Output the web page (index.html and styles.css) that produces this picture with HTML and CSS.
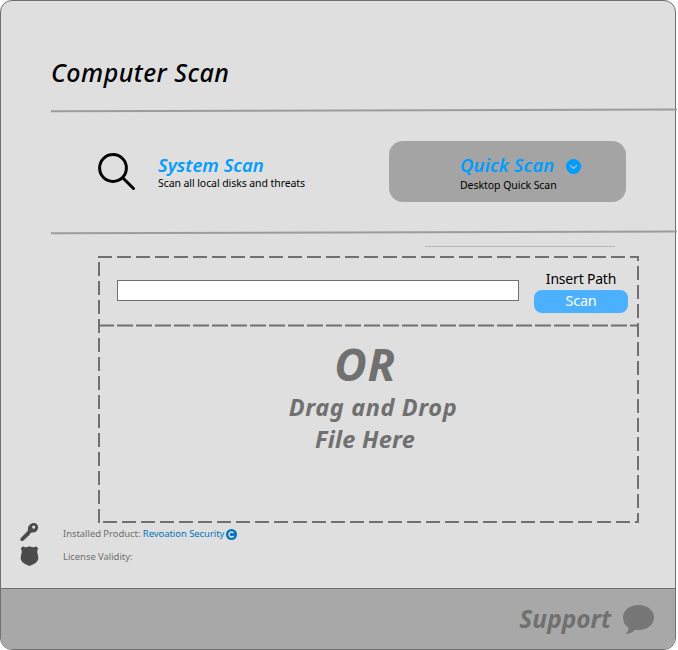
FILE: index.html
```html
<!DOCTYPE html>
<html lang="en">
<head>
<meta charset="utf-8">
<title>Computer Scan</title>
<link rel="stylesheet" href="styles.css">
</head>
<body>
<main class="window">
  <header class="header"><h1 class="title">Computer Scan</h1></header>
  <svg class="rule" viewBox="0 0 626 6"><path d="M0 4.3 626 2.4"/></svg>
  <section class="modes">
    <svg class="search" viewBox="0 0 38 38"><circle cx="15" cy="15" r="13.4"/><path d="m25 25 10.500 10.500"/></svg>
    <div class="mode system">
      <h2 class="mode-title"><span class="system-title">System Scan</span></h2>
      <p class="mode-text system-text">Scan all local disks and threats</p>
    </div>
    <div class="quick">
      <div class="mode">
        <h2 class="mode-title"><span class="quick-title">Quick Scan</span>
          <svg class="chevron" viewBox="0 0 15 15"><circle cx="7.5" cy="7.5" r="7.5"/><path d="m4 6.1 3.5 3.4L11 6.1"/></svg>
        </h2>
        <p class="mode-text quick-text">Desktop Quick Scan</p>
      </div>
    </div>
  </section>
  <svg class="rule" viewBox="0 0 626 6"><path d="M0 4.3 626 2.4"/></svg>
  <div class="thin-rule"></div>
  <section class="drop">
    <svg class="frame" viewBox="0 0 541 267">
      <rect class="outline" width="541" height="267"/>
      <path class="split" d="M1 69.5H539"/>
    </svg>
    <form class="path-row">
      <input class="path-input" type="text" aria-label="Path">
      <div class="path-action">
        <label class="path-label">Insert Path</label>
        <button class="scan" type="button"><span>Scan</span></button>
      </div>
    </form>
    <div class="drop-text">
      <p class="or">OR</p>
      <p class="drag">Drag and Drop</p>
      <p class="file">File Here</p>
    </div>
  </section>
  <section class="info">
    <div class="info-row">
      <svg class="info-icon" viewBox="0 0 20 20"><path fill-rule="evenodd" d="M12.4.3c3-1 6 1.2 5.7 4.4-.3 3.5-3.3 5.6-6.6 4.7L9.6 11.300l-.4 1.500-1.500.2-.3 1.500-1.500.3-.3 1.300-1.300.3L3 18 .5 17.700.4 15.500 8 7.500C7.200 4.300 9.200 1.200 12.400.3ZM13.700 2.500a1.600 1.600 0 1 0 .01 3.200 1.600 1.600 0 0 0-.01-3.200Z"/></svg>
      <p class="info-text"><span class="product">Installed Product:</span> <a class="link">Revoation Security</a></p>
      <svg class="badge" viewBox="0 0 11 11"><circle cx="5.500" cy="5.500" r="5.500"/><path d="M7.600 4A2.500 2.500 0 1 0 7.600 7"/></svg>
    </div>
    <div class="info-row">
      <svg class="info-icon" viewBox="0 0 20 20"><path d="M3 .2 4.800 1.200Q7 1.500 9.500.2 12 1.500 14.200 1.200L16 .2 18.300 2.400Q16.800 4 17.300 6.500L18.200 10.500C19 15.500 15.500 17.500 9.500 20 3.500 17.500 0 15.500.8 10.500L1.700 6.500Q2.200 4 .7 2.400Z"/></svg>
      <p class="info-text license">License Validity:</p>
    </div>
  </section>
  <footer class="footer">
    <span class="support">Support</span>
    <svg class="bubble" viewBox="0 0 32 30"><path d="M15.500 0C24.300 0 31 5.300 31 12.500S24.300 25 15.500 25c-1.200 0-2.300-.1-3.400-.3C9.500 27.600 6 29 2 29c2.500-1.500 3.600-3.400 3.500-6.200C2.200 20.500 0 16.800 0 12.500 0 5.300 6.700 0 15.500 0Z"/></svg>
  </footer>
</main>
</body>
</html>
```
FILE: styles.css
```css
* { box-sizing: border-box; }
body { margin: 0; background: #fff; font-family: "Noto Sans", "Open Sans", sans-serif; }
h1, h2, p { margin: 0; white-space: nowrap; }
svg { display: block; flex: none; }

.window {
  width: 676px; height: 650px;
  display: flex; flex-direction: column;
  background: #dfdfdf; border: 1px solid #707070; border-radius: 12px;
}
.header { height: 106px; padding: 54px 0 0 50px; flex: none; }
.title { font-size: 25px; line-height: 34px; font-weight: 500; font-style: italic; letter-spacing: .48px; color: #000; }

.rule { width: 626px; height: 6px; margin-left: 50px; overflow: visible; }
.rule path { stroke: #9c9c9c; stroke-width: 2; }

.modes { height: 116px; padding: 28px 49px 0 97px; display: flex; align-items: flex-start; flex: none; }
.search { width: 38px; height: 38px; margin-top: 12px; fill: none; stroke: #000; stroke-width: 3; stroke-linecap: round; }
.system { margin: 13px 0 0 22px; }
.mode-title { display: flex; align-items: center; gap: 12px; height: 22px; line-height: 22px; font-size: 18.500px; font-weight: 600; font-style: italic; color: #009dff; }
.quick-title { letter-spacing: .1px; }
.mode-text { font-size: 10.500px; line-height: 14px; color: #000; }
.system-text { letter-spacing: -.08px; }
.quick { width: 237px; height: 61px; margin-left: auto; padding: 13px 0 0 71px; background: #a4a4a4; border-radius: 14px; }
.quick-text { margin-top: 2px; letter-spacing: -.05px; }
.chevron { width: 15px; height: 15px; margin-top: 3px; fill: #009dff; }
.chevron path { fill: none; stroke: #c4c4c4; stroke-width: 1.200; }

.thin-rule { width: 190px; height: 1px; margin: 11px 0 0 424px; background: #b7b7b7; flex: none; }

.drop { position: relative; width: 541px; height: 267px; margin: 9px 0 0 97px; flex: none; }
.frame { position: absolute; inset: 0; width: 541px; height: 267px; overflow: hidden; pointer-events: none; }
.outline { fill: none; stroke: #707070; stroke-width: 4; stroke-dasharray: 14 5; }
.split { stroke: #707070; stroke-width: 2; stroke-dasharray: 16 3; stroke-dashoffset: 1; }
.path-row { display: flex; height: 70px; padding: 12px 11px 0 19px; }
.path-input { width: 402px; height: 21px; margin: 12px 0 0; padding: 0 6px; background: #fff; border: 1px solid #707070; border-radius: 0; font: inherit; }
.path-action { width: 94px; margin-left: auto; }
.path-label { display: block; height: 22px; line-height: 22px; font-size: 14px; letter-spacing: -.2px; text-align: center; white-space: nowrap; }
.scan { display: block; width: 94px; height: 23px; padding: 0; border: 0; border-radius: 8px; background: #4bb1ff; color: #fff; font: 14.500px/20px "Noto Sans", sans-serif; }
.scan span { display: block; height: 23px; letter-spacing: -.3px; }
.drop-text { padding-right: 7px; color: #707070; text-align: center; font-weight: 700; font-style: italic; }
.or { height: 65px; line-height: 76px; font-size: 44.500px; letter-spacing: .8px; }
.drag, .file { font-size: 23.500px; line-height: 32px; }
.drag { padding-left: 16px; letter-spacing: .6px; }
.file { letter-spacing: .25px; }

.info { height: 65px; padding-left: 19px; flex: none; display: flex; flex-direction: column; gap: 3px; }
.info-row { display: flex; align-items: center; height: 20px; }
.info-icon { width: 20px; height: 20px; fill: #4b4b4b; }
.info-text { margin: 2px 0 0 23px; font-size: 9.500px; line-height: 20px; letter-spacing: -.06px; color: #707070; }
.link { color: #0073ba; }
.badge { width: 11px; height: 11px; margin: 3px 0 0 2px; fill: #0073ba; }
.badge path { fill: none; stroke: #dfdfdf; stroke-width: 1.600; }

.footer { flex: 1; display: flex; padding: 15px 20px 0 0; justify-content: flex-end; background: #a8a8a8; border-top: 1px solid #707070; border-radius: 0 0 11px 11px; }
.support { font-size: 24.500px; line-height: 30px; font-weight: 700; font-style: italic; color: #707070; margin-right: 12px; }
.bubble { width: 32px; height: 30px; margin-top: 1px; fill: #777; }
```
